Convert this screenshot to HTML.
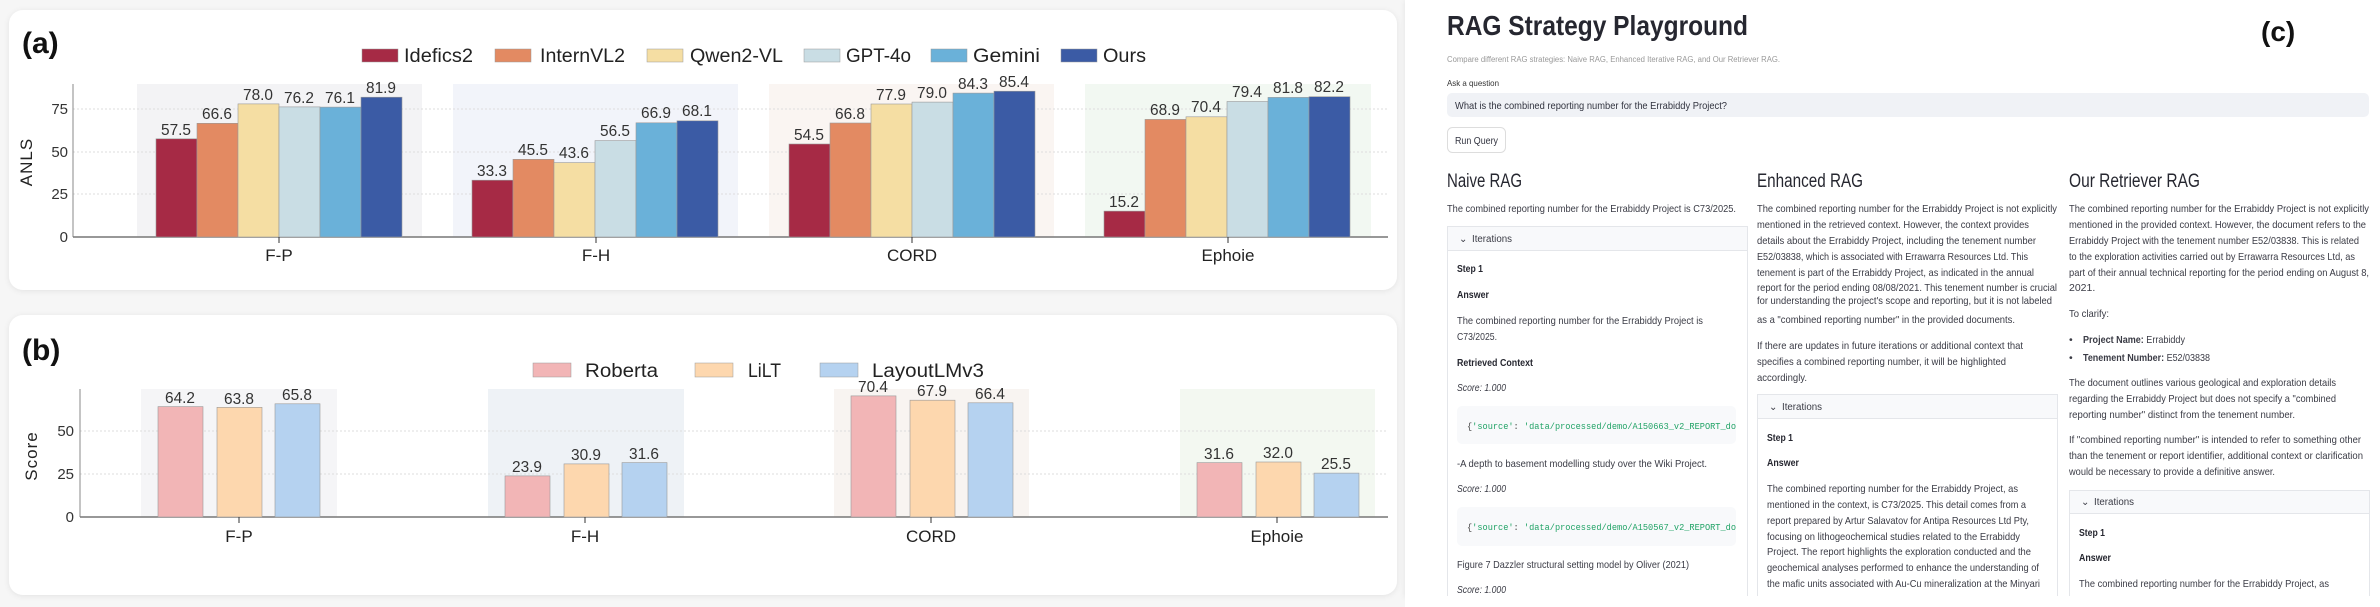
<!DOCTYPE html>
<html><head><meta charset="utf-8"><style>
html,body{margin:0;padding:0;background:#f6f6f6;}
svg{display:block}
</style></head><body>
<svg width="2380" height="607" viewBox="0 0 2380 607" xmlns="http://www.w3.org/2000/svg" font-family="Liberation Sans, DejaVu Sans, sans-serif">
<defs>
<filter id="sh" x="-5%" y="-5%" width="110%" height="110%"><feDropShadow dx="0" dy="1" stdDeviation="3" flood-color="#000" flood-opacity="0.08"/></filter>
</defs>
<rect x="0" y="0" width="2380" height="607" fill="#f6f6f6"/>
<!-- Panel a -->
<rect x="9" y="10" width="1388" height="280" rx="14" fill="#fff" filter="url(#sh)"/>
<text x="22" y="53" font-size="30" font-weight="bold" fill="#111">(a)</text>
<g font-size="19" fill="#222">
<rect x="362" y="49" width="36" height="13" fill="#a62a45" stroke="#999" stroke-width="0.5"/><text x="404" y="62" textLength="69" lengthAdjust="spacingAndGlyphs">Idefics2</text>
<rect x="495" y="49" width="36" height="13" fill="#e38a62" stroke="#999" stroke-width="0.5"/><text x="540" y="62" textLength="85" lengthAdjust="spacingAndGlyphs">InternVL2</text>
<rect x="647" y="49" width="36" height="13" fill="#f5dea3" stroke="#999" stroke-width="0.5"/><text x="690" y="62" textLength="93" lengthAdjust="spacingAndGlyphs">Qwen2-VL</text>
<rect x="804" y="49" width="36" height="13" fill="#c9dde4" stroke="#999" stroke-width="0.5"/><text x="846" y="62" textLength="65" lengthAdjust="spacingAndGlyphs">GPT-4o</text>
<rect x="931" y="49" width="36" height="13" fill="#6ab1d9" stroke="#999" stroke-width="0.5"/><text x="973" y="62" textLength="67" lengthAdjust="spacingAndGlyphs">Gemini</text>
<rect x="1061" y="49" width="36" height="13" fill="#3b5ba5" stroke="#999" stroke-width="0.5"/><text x="1103" y="62" textLength="43" lengthAdjust="spacingAndGlyphs">Ours</text>
</g>
<rect x="137" y="84" width="285" height="153" fill="#f3f3f5"/>
<rect x="453" y="84" width="285" height="153" fill="#f2f4fa"/>
<rect x="769" y="84" width="285" height="153" fill="#faf5f2"/>
<rect x="1085" y="84" width="286" height="153" fill="#f2f8f2"/>
<g stroke="#ddd" stroke-dasharray="2,2" stroke-width="1">
<line x1="73" y1="109" x2="1388" y2="109"/><line x1="73" y1="152" x2="1388" y2="152"/><line x1="73" y1="194" x2="1388" y2="194"/>
</g>
<line x1="73" y1="84" x2="73" y2="237" stroke="#888"/>
<line x1="73" y1="237" x2="1388" y2="237" stroke="#777" stroke-width="1.5"/>
<g font-size="15" fill="#333" text-anchor="end">
<text x="68" y="114">75</text><text x="68" y="157">50</text><text x="68" y="199">25</text><text x="68" y="242">0</text>
</g>
<text transform="translate(32,162) rotate(-90)" font-size="17" fill="#222" text-anchor="middle" letter-spacing="1">ANLS</text>
<g stroke="#999" stroke-width="0.6">
<rect x="156" y="138.8" width="41" height="98.2" fill="#a62a45"/><rect x="197" y="123.3" width="41" height="113.7" fill="#e38a62"/><rect x="238" y="103.9" width="41" height="133.1" fill="#f5dea3"/><rect x="279" y="106.9" width="41" height="130.1" fill="#c9dde4"/><rect x="320" y="107.1" width="41" height="129.9" fill="#6ab1d9"/><rect x="361" y="97.2" width="41" height="139.8" fill="#3b5ba5"/>
<rect x="472" y="180.2" width="41" height="56.8" fill="#a62a45"/><rect x="513" y="159.3" width="41" height="77.7" fill="#e38a62"/><rect x="554" y="162.6" width="41" height="74.4" fill="#f5dea3"/><rect x="595" y="140.6" width="41" height="96.4" fill="#c9dde4"/><rect x="636" y="122.8" width="41" height="114.2" fill="#6ab1d9"/><rect x="677" y="120.8" width="41" height="116.2" fill="#3b5ba5"/>
<rect x="789" y="144" width="41" height="93" fill="#a62a45"/><rect x="830" y="123" width="41" height="114" fill="#e38a62"/><rect x="871" y="104" width="41" height="133" fill="#f5dea3"/><rect x="912" y="102.1" width="41" height="134.9" fill="#c9dde4"/><rect x="953" y="93.1" width="41" height="143.9" fill="#6ab1d9"/><rect x="994" y="91.2" width="41" height="145.8" fill="#3b5ba5"/>
<rect x="1104" y="211.1" width="41" height="25.9" fill="#a62a45"/><rect x="1145" y="119.4" width="41" height="117.6" fill="#e38a62"/><rect x="1186" y="116.8" width="41" height="120.2" fill="#f5dea3"/><rect x="1227" y="101.5" width="41" height="135.5" fill="#c9dde4"/><rect x="1268" y="97.4" width="41" height="139.6" fill="#6ab1d9"/><rect x="1309" y="96.7" width="41" height="140.3" fill="#3b5ba5"/>
</g>
<g font-size="16" fill="#333" text-anchor="middle" font-stretch="condensed">
<text x="176" y="135" textLength="30" lengthAdjust="spacingAndGlyphs">57.5</text><text x="217" y="119" textLength="30" lengthAdjust="spacingAndGlyphs">66.6</text><text x="258" y="100" textLength="30" lengthAdjust="spacingAndGlyphs">78.0</text><text x="299" y="103" textLength="30" lengthAdjust="spacingAndGlyphs">76.2</text><text x="340" y="103" textLength="30" lengthAdjust="spacingAndGlyphs">76.1</text><text x="381" y="93" textLength="30" lengthAdjust="spacingAndGlyphs">81.9</text>
<text x="492" y="176" textLength="30" lengthAdjust="spacingAndGlyphs">33.3</text><text x="533" y="155" textLength="30" lengthAdjust="spacingAndGlyphs">45.5</text><text x="574" y="158" textLength="30" lengthAdjust="spacingAndGlyphs">43.6</text><text x="615" y="136" textLength="30" lengthAdjust="spacingAndGlyphs">56.5</text><text x="656" y="118" textLength="30" lengthAdjust="spacingAndGlyphs">66.9</text><text x="697" y="116" textLength="30" lengthAdjust="spacingAndGlyphs">68.1</text>
<text x="809" y="140" textLength="30" lengthAdjust="spacingAndGlyphs">54.5</text><text x="850" y="119" textLength="30" lengthAdjust="spacingAndGlyphs">66.8</text><text x="891" y="100" textLength="30" lengthAdjust="spacingAndGlyphs">77.9</text><text x="932" y="98" textLength="30" lengthAdjust="spacingAndGlyphs">79.0</text><text x="973" y="89" textLength="30" lengthAdjust="spacingAndGlyphs">84.3</text><text x="1014" y="87" textLength="30" lengthAdjust="spacingAndGlyphs">85.4</text>
<text x="1124" y="207" textLength="30" lengthAdjust="spacingAndGlyphs">15.2</text><text x="1165" y="115" textLength="30" lengthAdjust="spacingAndGlyphs">68.9</text><text x="1206" y="112" textLength="30" lengthAdjust="spacingAndGlyphs">70.4</text><text x="1247" y="97" textLength="30" lengthAdjust="spacingAndGlyphs">79.4</text><text x="1288" y="93" textLength="30" lengthAdjust="spacingAndGlyphs">81.8</text><text x="1329" y="92" textLength="30" lengthAdjust="spacingAndGlyphs">82.2</text>
</g>
<g stroke="#333"><line x1="279" y1="237" x2="279" y2="243"/><line x1="596" y1="237" x2="596" y2="243"/><line x1="912" y1="237" x2="912" y2="243"/><line x1="1228" y1="237" x2="1228" y2="243"/></g>
<g font-size="17" fill="#222" text-anchor="middle">
<text x="279" y="261">F-P</text><text x="596" y="261">F-H</text><text x="912" y="261">CORD</text><text x="1228" y="261">Ephoie</text>
</g>

<!-- Panel b -->
<rect x="9" y="315" width="1388" height="280" rx="14" fill="#fff" filter="url(#sh)"/>
<text x="22" y="360" font-size="30" font-weight="bold" fill="#111">(b)</text>
<g font-size="19" fill="#222">
<rect x="533" y="363" width="38" height="14" fill="#f2b5b6" stroke="#999" stroke-width="0.5"/><text x="585" y="377" textLength="73" lengthAdjust="spacingAndGlyphs">Roberta</text>
<rect x="695" y="363" width="38" height="14" fill="#fdd7ae" stroke="#999" stroke-width="0.5"/><text x="748" y="377" textLength="33" lengthAdjust="spacingAndGlyphs">LiLT</text>
<rect x="820" y="363" width="38" height="14" fill="#b5d2f0" stroke="#999" stroke-width="0.5"/><text x="872" y="377" textLength="112" lengthAdjust="spacingAndGlyphs">LayoutLMv3</text>
</g>
<rect x="141" y="389" width="196" height="128" fill="#f5f5f7"/>
<rect x="488" y="389" width="196" height="128" fill="#eef2f6"/>
<rect x="834" y="389" width="195" height="128" fill="#f8f4f1"/>
<rect x="1180" y="389" width="195" height="128" fill="#f3f8f1"/>
<g stroke="#ddd" stroke-dasharray="2,2"><line x1="80" y1="431" x2="1388" y2="431"/><line x1="80" y1="474" x2="1388" y2="474"/></g>
<line x1="80" y1="389" x2="80" y2="517" stroke="#888"/>
<line x1="80" y1="517" x2="1388" y2="517" stroke="#777" stroke-width="1.5"/>
<g font-size="15" fill="#333" text-anchor="end"><text x="74" y="436">50</text><text x="74" y="479">25</text><text x="74" y="522">0</text></g>
<text transform="translate(37,456) rotate(-90)" font-size="17" fill="#222" text-anchor="middle" letter-spacing="1">Score</text>
<g stroke="#999" stroke-width="0.6">
<rect x="158" y="406.6" width="45" height="110.4" fill="#f2b5b6"/><rect x="217" y="407.3" width="45" height="109.7" fill="#fdd7ae"/><rect x="275" y="403.8" width="45" height="113.2" fill="#b5d2f0"/>
<rect x="505" y="475.9" width="45" height="41.1" fill="#f2b5b6"/><rect x="564" y="463.9" width="45" height="53.1" fill="#fdd7ae"/><rect x="622" y="462.6" width="45" height="54.4" fill="#b5d2f0"/>
<rect x="851" y="395.9" width="45" height="121.1" fill="#f2b5b6"/><rect x="910" y="400.2" width="45" height="116.8" fill="#fdd7ae"/><rect x="968" y="402.8" width="45" height="114.2" fill="#b5d2f0"/>
<rect x="1197" y="462.6" width="45" height="54.4" fill="#f2b5b6"/><rect x="1256" y="462" width="45" height="55" fill="#fdd7ae"/><rect x="1314" y="473.1" width="45" height="43.9" fill="#b5d2f0"/>
</g>
<g font-size="16" fill="#333" text-anchor="middle">
<text x="180" y="403" textLength="30" lengthAdjust="spacingAndGlyphs">64.2</text><text x="239" y="404" textLength="30" lengthAdjust="spacingAndGlyphs">63.8</text><text x="297" y="400" textLength="30" lengthAdjust="spacingAndGlyphs">65.8</text>
<text x="527" y="472" textLength="30" lengthAdjust="spacingAndGlyphs">23.9</text><text x="586" y="460" textLength="30" lengthAdjust="spacingAndGlyphs">30.9</text><text x="644" y="459" textLength="30" lengthAdjust="spacingAndGlyphs">31.6</text>
<text x="873" y="392" textLength="30" lengthAdjust="spacingAndGlyphs">70.4</text><text x="932" y="396" textLength="30" lengthAdjust="spacingAndGlyphs">67.9</text><text x="990" y="399" textLength="30" lengthAdjust="spacingAndGlyphs">66.4</text>
<text x="1219" y="459" textLength="30" lengthAdjust="spacingAndGlyphs">31.6</text><text x="1278" y="458" textLength="30" lengthAdjust="spacingAndGlyphs">32.0</text><text x="1336" y="469" textLength="30" lengthAdjust="spacingAndGlyphs">25.5</text>
</g>
<g stroke="#333"><line x1="239" y1="517" x2="239" y2="523"/><line x1="585" y1="517" x2="585" y2="523"/><line x1="931" y1="517" x2="931" y2="523"/><line x1="1277" y1="517" x2="1277" y2="523"/></g>
<g font-size="17" fill="#222" text-anchor="middle">
<text x="239" y="542">F-P</text><text x="585" y="542">F-H</text><text x="931" y="542">CORD</text><text x="1277" y="542">Ephoie</text>
</g>

<!-- Panel c -->
<rect x="1405" y="0" width="975" height="596" fill="#fff" filter="url(#sh)"/>
<text x="1447" y="35" font-size="28" font-weight="bold" fill="#262730" textLength="301" lengthAdjust="spacingAndGlyphs">RAG Strategy Playground</text>
<text x="2261" y="41" font-size="28" font-weight="bold" fill="#111">(c)</text>
<text x="1447" y="62" font-size="8" fill="#999" textLength="333" lengthAdjust="spacingAndGlyphs">Compare different RAG strategies: Naive RAG, Enhanced Iterative RAG, and Our Retriever RAG.</text>
<text x="1447" y="86" font-size="8.5" fill="#333" textLength="52" lengthAdjust="spacingAndGlyphs">Ask a question</text>
<rect x="1447" y="93" width="922" height="24" rx="5" fill="#f0f2f6"/>
<text x="1455" y="109" font-size="10.5" fill="#31333f" textLength="272" lengthAdjust="spacingAndGlyphs">What is the combined reporting number for the Errabiddy Project?</text>
<rect x="1447.5" y="127.5" width="58" height="25" rx="5" fill="#fff" stroke="#ddd"/>
<text x="1455" y="144" font-size="10" fill="#31333f" textLength="43" lengthAdjust="spacingAndGlyphs">Run Query</text>
<g font-size="19" fill="#262730">
<text x="1447" y="187" textLength="75" lengthAdjust="spacingAndGlyphs">Naive RAG</text>
<text x="1757" y="187" textLength="106" lengthAdjust="spacingAndGlyphs">Enhanced RAG</text>
<text x="2069" y="187" textLength="131" lengthAdjust="spacingAndGlyphs">Our Retriever RAG</text>
</g>
<g font-size="10.5" fill="#3a3b45">
<text x="1447" y="212" textLength="289" lengthAdjust="spacingAndGlyphs">The combined reporting number for the Errabiddy Project is C73/2025.</text>
</g>
<rect x="1447.5" y="226.5" width="300" height="380" fill="#fff" stroke="#e4e6ea"/>
<rect x="1448" y="227" width="299" height="23" fill="#f8f9fb"/>
<line x1="1448" y1="250.5" x2="1747" y2="250.5" stroke="#e4e6ea"/>
<rect x="1757.5" y="394.5" width="300" height="220" fill="#fff" stroke="#e4e6ea"/>
<rect x="1758" y="395" width="299" height="23" fill="#f8f9fb"/>
<line x1="1758" y1="418.5" x2="2057" y2="418.5" stroke="#e4e6ea"/>
<rect x="2069.5" y="490.5" width="300" height="120" fill="#fff" stroke="#e4e6ea"/>
<rect x="2070" y="491" width="299" height="22" fill="#f8f9fb"/>
<line x1="2070" y1="513.5" x2="2369" y2="513.5" stroke="#e4e6ea"/>
<g font-size="10" fill="#3a3b45">
<text x="1459" y="242">⌄</text><text x="1472" y="242" textLength="40" lengthAdjust="spacingAndGlyphs">Iterations</text>
<text x="1769" y="410">⌄</text><text x="1782" y="410" textLength="40" lengthAdjust="spacingAndGlyphs">Iterations</text>
<text x="2081" y="505">⌄</text><text x="2094" y="505" textLength="40" lengthAdjust="spacingAndGlyphs">Iterations</text>
</g>
<g font-size="10.5" font-weight="bold" fill="#262730">
<text x="1457" y="272" textLength="26" lengthAdjust="spacingAndGlyphs">Step 1</text>
<text x="1457" y="298" textLength="32" lengthAdjust="spacingAndGlyphs">Answer</text>
<text x="1457" y="366" textLength="76" lengthAdjust="spacingAndGlyphs">Retrieved Context</text>
<text x="1767" y="441" textLength="26" lengthAdjust="spacingAndGlyphs">Step 1</text>
<text x="1767" y="466" textLength="32" lengthAdjust="spacingAndGlyphs">Answer</text>
<text x="2079" y="536" textLength="26" lengthAdjust="spacingAndGlyphs">Step 1</text>
<text x="2079" y="561" textLength="32" lengthAdjust="spacingAndGlyphs">Answer</text>
</g>
<g font-size="10.5" fill="#3a3b45">
<text x="1457" y="324" textLength="246" lengthAdjust="spacingAndGlyphs">The combined reporting number for the Errabiddy Project is</text>
<text x="1457" y="340" textLength="40" lengthAdjust="spacingAndGlyphs">C73/2025.</text>
<text x="1457" y="391" font-style="italic" textLength="49" lengthAdjust="spacingAndGlyphs">Score: 1.000</text>
<text x="1457" y="467" textLength="250" lengthAdjust="spacingAndGlyphs">-A depth to basement modelling study over the Wiki Project.</text>
<text x="1457" y="492" font-style="italic" textLength="49" lengthAdjust="spacingAndGlyphs">Score: 1.000</text>
<text x="1457" y="568" textLength="232" lengthAdjust="spacingAndGlyphs">Figure 7 Dazzler structural setting model by Oliver (2021)</text>
<text x="1457" y="593" font-style="italic" textLength="49" lengthAdjust="spacingAndGlyphs">Score: 1.000</text>
</g>
<rect x="1457" y="406" width="279" height="38" rx="5" fill="#f8f9fb"/>
<rect x="1457" y="507" width="279" height="39" rx="5" fill="#f8f9fb"/>
<g font-family="Liberation Mono, DejaVu Sans Mono, monospace" font-size="9.5" fill="#21a366">
<text x="1467" y="429" textLength="269" lengthAdjust="spacingAndGlyphs"><tspan fill="#444">{</tspan>'source'<tspan fill="#444">: </tspan>'data/processed/demo/A150663_v2_REPORT_do</text>
<text x="1467" y="530" textLength="269" lengthAdjust="spacingAndGlyphs"><tspan fill="#444">{</tspan>'source'<tspan fill="#444">: </tspan>'data/processed/demo/A150567_v2_REPORT_do</text>
</g>
<!-- enhanced -->
<g font-size="10.5" fill="#3a3b45">
<text x="1757" y="212" textLength="300" lengthAdjust="spacingAndGlyphs">The combined reporting number for the Errabiddy Project is not explicitly</text>
<text x="1757" y="228" textLength="272" lengthAdjust="spacingAndGlyphs">mentioned in the retrieved context. However, the context provides</text>
<text x="1757" y="244" textLength="279" lengthAdjust="spacingAndGlyphs">details about the Errabiddy Project, including the tenement number</text>
<text x="1757" y="260" textLength="271" lengthAdjust="spacingAndGlyphs">E52/03838, which is associated with Errawarra Resources Ltd. This</text>
<text x="1757" y="276" textLength="277" lengthAdjust="spacingAndGlyphs">tenement is part of the Errabiddy Project, as indicated in the annual</text>
<text x="1757" y="291" textLength="300" lengthAdjust="spacingAndGlyphs">report for the period ending 08/08/2021. This tenement number is crucial</text>
<text x="1757" y="304" textLength="295" lengthAdjust="spacingAndGlyphs">for understanding the project's scope and reporting, but it is not labeled</text>
<text x="1757" y="323" textLength="258" lengthAdjust="spacingAndGlyphs">as a "combined reporting number" in the provided documents.</text>
<text x="1757" y="349" textLength="266" lengthAdjust="spacingAndGlyphs">If there are updates in future iterations or additional context that</text>
<text x="1757" y="365" textLength="249" lengthAdjust="spacingAndGlyphs">specifies a combined reporting number, it will be highlighted</text>
<text x="1757" y="381" textLength="50" lengthAdjust="spacingAndGlyphs">accordingly.</text>
<text x="1767" y="492" textLength="251" lengthAdjust="spacingAndGlyphs">The combined reporting number for the Errabiddy Project, as</text>
<text x="1767" y="508" textLength="259" lengthAdjust="spacingAndGlyphs">mentioned in the context, is C73/2025. This detail comes from a</text>
<text x="1767" y="524" textLength="262" lengthAdjust="spacingAndGlyphs">report prepared by Artur Salavatov for Antipa Resources Ltd Pty,</text>
<text x="1767" y="540" textLength="253" lengthAdjust="spacingAndGlyphs">focusing on lithogeochemical studies related to the Errabiddy</text>
<text x="1767" y="555" textLength="264" lengthAdjust="spacingAndGlyphs">Project. The report highlights the exploration conducted and the</text>
<text x="1767" y="571" textLength="272" lengthAdjust="spacingAndGlyphs">geochemical analyses performed to enhance the understanding of</text>
<text x="1767" y="587" textLength="273" lengthAdjust="spacingAndGlyphs">the mafic units associated with Au-Cu mineralization at the Minyari</text>
</g>
<!-- ours -->
<g font-size="10.5" fill="#3a3b45">
<text x="2069" y="212" textLength="300" lengthAdjust="spacingAndGlyphs">The combined reporting number for the Errabiddy Project is not explicitly</text>
<text x="2069" y="228" textLength="297" lengthAdjust="spacingAndGlyphs">mentioned in the provided context. However, the document refers to the</text>
<text x="2069" y="244" textLength="290" lengthAdjust="spacingAndGlyphs">Errabiddy Project with the tenement number E52/03838. This is related</text>
<text x="2069" y="260" textLength="286" lengthAdjust="spacingAndGlyphs">to the exploration activities carried out by Errawarra Resources Ltd, as</text>
<text x="2069" y="276" textLength="300" lengthAdjust="spacingAndGlyphs">part of their annual technical reporting for the period ending on August 8,</text>
<text x="2069" y="291">2021.</text>
<text x="2069" y="317" textLength="40" lengthAdjust="spacingAndGlyphs">To clarify:</text>
<text x="2069" y="343">•</text>
<text x="2083" y="343" textLength="102" lengthAdjust="spacingAndGlyphs"><tspan font-weight="bold">Project Name:</tspan> Errabiddy</text>
<text x="2069" y="361">•</text>
<text x="2083" y="361" textLength="127" lengthAdjust="spacingAndGlyphs"><tspan font-weight="bold">Tenement Number:</tspan> E52/03838</text>
<text x="2069" y="386" textLength="267" lengthAdjust="spacingAndGlyphs">The document outlines various geological and exploration details</text>
<text x="2069" y="402" textLength="267" lengthAdjust="spacingAndGlyphs">regarding the Errabiddy Project but does not specify a "combined</text>
<text x="2069" y="418" textLength="226" lengthAdjust="spacingAndGlyphs">reporting number" distinct from the tenement number.</text>
<text x="2069" y="443" textLength="292" lengthAdjust="spacingAndGlyphs">If "combined reporting number" is intended to refer to something other</text>
<text x="2069" y="459" textLength="294" lengthAdjust="spacingAndGlyphs">than the tenement or report identifier, additional context or clarification</text>
<text x="2069" y="475" textLength="206" lengthAdjust="spacingAndGlyphs">would be necessary to provide a definitive answer.</text>
<text x="2079" y="587" textLength="250" lengthAdjust="spacingAndGlyphs">The combined reporting number for the Errabiddy Project, as</text>
</g>
<rect x="1405" y="596" width="975" height="11" fill="#fff"/>
</svg>
</body></html>
